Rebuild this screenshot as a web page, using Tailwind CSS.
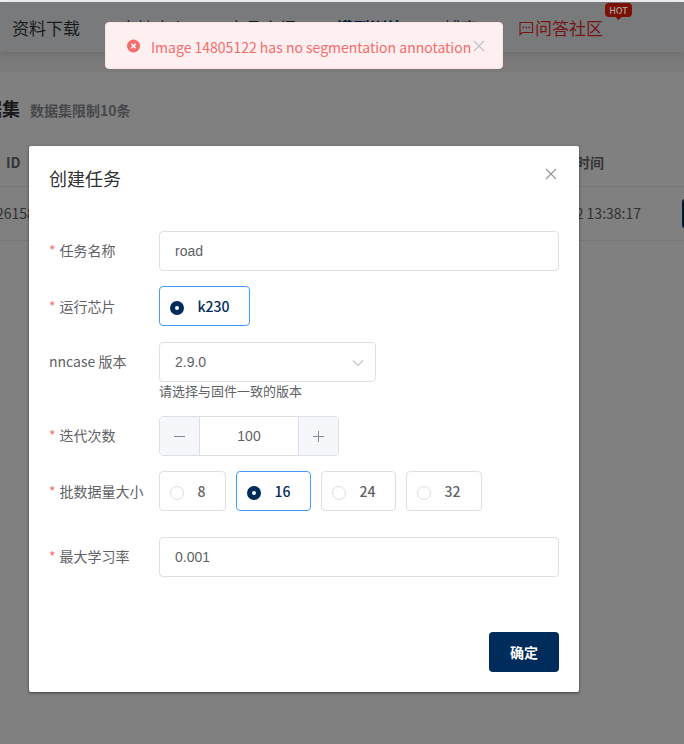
<!DOCTYPE html>
<html lang="zh-CN">
<head>
<meta charset="utf-8">
<title>创建任务</title>
<script src="https://cdn.jsdelivr.net/npm/@tailwindcss/browser@4"></script>
</head>
<body class="relative h-[744px] w-[684px] overflow-hidden bg-[#808080] font-['Noto_Sans_CJK_SC',sans-serif] text-sm text-[#606266]">
<div class="h-[2px] bg-[#f0f2f5]"></div>
<nav class="relative z-10 flex h-[50px] items-center gap-10 bg-[#787a7c] pt-[2px] pl-3 text-[17px] leading-[48px] whitespace-nowrap text-[#191a1c] shadow-[0_2px_8px_rgba(0,0,0,0.12)]">
  <span class="w-[68px] shrink-0">资料下载</span>
  <span class="w-[68px] shrink-0">支持中心</span>
  <span class="w-[68px] shrink-0">产品介绍</span>
  <span class="w-[68px] shrink-0 font-bold text-[#001830]">模型训练</span>
  <span class="w-[34px] shrink-0">博客</span>
  <span class="relative flex shrink-0 items-center text-[#761614]">
    <svg class="h-[17px] w-[17px]" viewBox="0 0 17 17" fill="none" stroke="currentColor" stroke-width="1.1"><path d="M2 2.500h12.500v10H4.500L2 14.500z"/><path d="M4.500 7.500h1.500M7.500 7.500h1.500M10.500 7.500h1.500" stroke-width="1.500"/></svg>问答社区
    <span class="absolute top-[-1px] left-[87px] flex h-[14px] w-[27px] items-center justify-center rounded-[4px] bg-[#7b1004] text-[9px] leading-none font-medium text-[#a9a3a2]">HOT<i class="absolute -bottom-[2px] left-[11px] h-[5px] w-[5px] rotate-45 bg-[#7b1004]"></i></span>
  </span>
</nav>
<div class="h-5 bg-[#7a7a7a]"></div>
<header class="flex h-[68px] items-center pt-[6px] whitespace-nowrap">
  <h2 class="-ml-[34px] text-[18px] font-bold text-[#17181a]">数据集</h2>
  <span class="mt-[1px] ml-[10px] text-[14px] font-bold text-[#46484b]">数据集限制10条</span>
</header>
<div class="flex h-[47px] items-center justify-between border-b border-[#75767a] pr-[80px] pb-[2px] pl-[6px] font-bold text-[#35363a]"><span>ID</span><span>创建时间</span></div>
<div class="relative flex h-[54px] items-center justify-between border-b border-[#75767a] pr-[43px] pb-[2px] text-[#303133]"><span class="-ml-[4px]">26158</span><span>2025-08-12 13:38:17</span><i class="absolute top-[12px] left-[682px] h-[29px] w-5 rounded-[3px] bg-[#00172e]"></i></div>

<section class="absolute top-[146px] left-[29px] z-20 flex h-[546px] w-[550px] flex-col rounded-[2px] bg-white px-5 shadow-[0_1px_3px_rgba(0,0,0,0.5)]">
  <div class="flex h-[85px] items-start justify-between pt-[20px]">
    <h1 class="text-[18px] leading-6 text-[#303133]">创建任务</h1>
    <svg class="h-4 w-4" viewBox="0 0 16 16" fill="none" stroke="#909399" stroke-width="1.1"><path d="M3 3l10 10M13 3L3 13"/></svg>
  </div>
  <div class="mb-[15px] flex h-10 items-center">
    <label class="w-[110px] pb-[2px]"><span class="mr-1 text-[#f56c6c]">*</span>任务名称</label>
    <div class="flex h-10 w-[400px] items-center rounded-[4px] border border-[#dcdfe6] px-[15px] font-['Liberation_Sans',sans-serif]">road</div>
  </div>
  <div class="mb-4 flex h-10 items-center">
    <label class="w-[110px]"><span class="mr-1 text-[#f56c6c]">*</span>运行芯片</label>
    <div class="flex h-10 w-[91px] items-center rounded-[4px] border border-[#409eff] pl-[10px] font-medium text-[#002c5b]"><i class="mt-[3px] mr-[13.5px] h-[14px] w-[14px] rounded-full border-[5px] border-[#002c5b] bg-white"></i>k230</div>
  </div>
  <div class="flex h-10 items-center">
    <label class="w-[110px] pb-[2px]">nncase 版本</label>
    <div class="flex h-10 w-[217px] items-center justify-between rounded-[4px] border border-[#dcdfe6] pr-[10px] pl-[15px] font-['Liberation_Sans',sans-serif]">2.9.0<svg class="mt-[2px] h-[14px] w-[14px]" viewBox="0 0 14 14" fill="none" stroke="#c0c4cc" stroke-width="1.2"><path d="M2 4.500l5 5 5-5"/></svg></div>
  </div>
  <p class="mb-[16px] ml-[110px] h-[18px] text-[13px] leading-[18px]">请选择与固件一致的版本</p>
  <div class="mb-[15px] flex h-10 items-center">
    <label class="w-[110px] pb-[2px]"><span class="mr-1 text-[#f56c6c]">*</span>迭代次数</label>
    <div class="flex h-10 w-[180px] overflow-hidden rounded-[4px] border border-[#dcdfe6] font-['Liberation_Sans',sans-serif]">
      <div class="flex w-10 items-center justify-center border-r border-[#dcdfe6] bg-[#f5f7fa]"><svg class="h-[13px] w-[13px]" viewBox="0 0 13 13" stroke="#85878c"><path d="M1 6.500h11"/></svg></div>
      <div class="flex flex-1 items-center justify-center">100</div>
      <div class="flex w-10 items-center justify-center border-l border-[#dcdfe6] bg-[#f5f7fa]"><svg class="h-[13px] w-[13px]" viewBox="0 0 13 13" stroke="#85878c"><path d="M1 6.500h11M6.500 1v11"/></svg></div>
    </div>
  </div>
  <div class="mb-[26px] flex h-10 items-center">
    <label class="w-[110px] shrink-0 whitespace-nowrap"><span class="mr-1 text-[#f56c6c]">*</span>批数据量大小</label>
    <div class="flex gap-[10px] font-medium">
      <div class="flex h-10 w-[67px] items-center rounded-[4px] border border-[#dcdfe6] pl-[10px]"><i class="mt-[3px] mr-[13.5px] h-[14px] w-[14px] rounded-full border border-[#dcdfe6]"></i>8</div>
      <div class="flex h-10 w-[75px] items-center rounded-[4px] border border-[#409eff] pl-[10px] text-[#002c5b]"><i class="mt-[3px] mr-[13.5px] h-[14px] w-[14px] rounded-full border-[5px] border-[#002c5b]"></i>16</div>
      <div class="flex h-10 w-[75px] items-center rounded-[4px] border border-[#dcdfe6] pl-[10px]"><i class="mt-[3px] mr-[13.5px] h-[14px] w-[14px] rounded-full border border-[#dcdfe6]"></i>24</div>
      <div class="flex h-10 w-[76px] items-center rounded-[4px] border border-[#dcdfe6] pl-[10px]"><i class="mt-[3px] mr-[13.5px] h-[14px] w-[14px] rounded-full border border-[#dcdfe6]"></i>32</div>
    </div>
  </div>
  <div class="flex h-10 items-center">
    <label class="w-[110px] pb-[2px]"><span class="mr-1 text-[#f56c6c]">*</span>最大学习率</label>
    <div class="flex h-10 w-[400px] items-center rounded-[4px] border border-[#dcdfe6] px-[15px] font-['Liberation_Sans',sans-serif]">0.001</div>
  </div>
  <button class="mt-auto mb-5 h-10 w-[70px] self-end rounded-[4px] bg-[#002c5b] text-[14px] font-bold text-white">确定</button>
</section>

<div class="absolute top-[22px] left-[105px] z-30 flex h-[47px] w-[398px] items-center rounded-[4px] border border-[#fde2e2] bg-[#fef0f0] pl-[20px] text-[#f56c6c]">
  <svg class="mr-[11px] h-[14px] w-[14px] shrink-0" viewBox="0 0 14 14"><circle cx="7.500" cy="7" r="6.500" fill="#f56c6c"/><path d="M5.300 4.800l4.400 4.400M9.700 4.800L5.300 9.200" stroke="#fff" stroke-width="1.500"/></svg>
  <span class="pt-[2px] whitespace-nowrap">Image 14805122 has no segmentation annotation</span>
  <svg class="absolute top-[15px] right-[15px] h-4 w-4" viewBox="0 0 16 16" fill="none" stroke="#c0c4cc" stroke-width="1.200"><path d="M3 3l10 10M13 3L3 13"/></svg>
</div>
</body>
</html>
